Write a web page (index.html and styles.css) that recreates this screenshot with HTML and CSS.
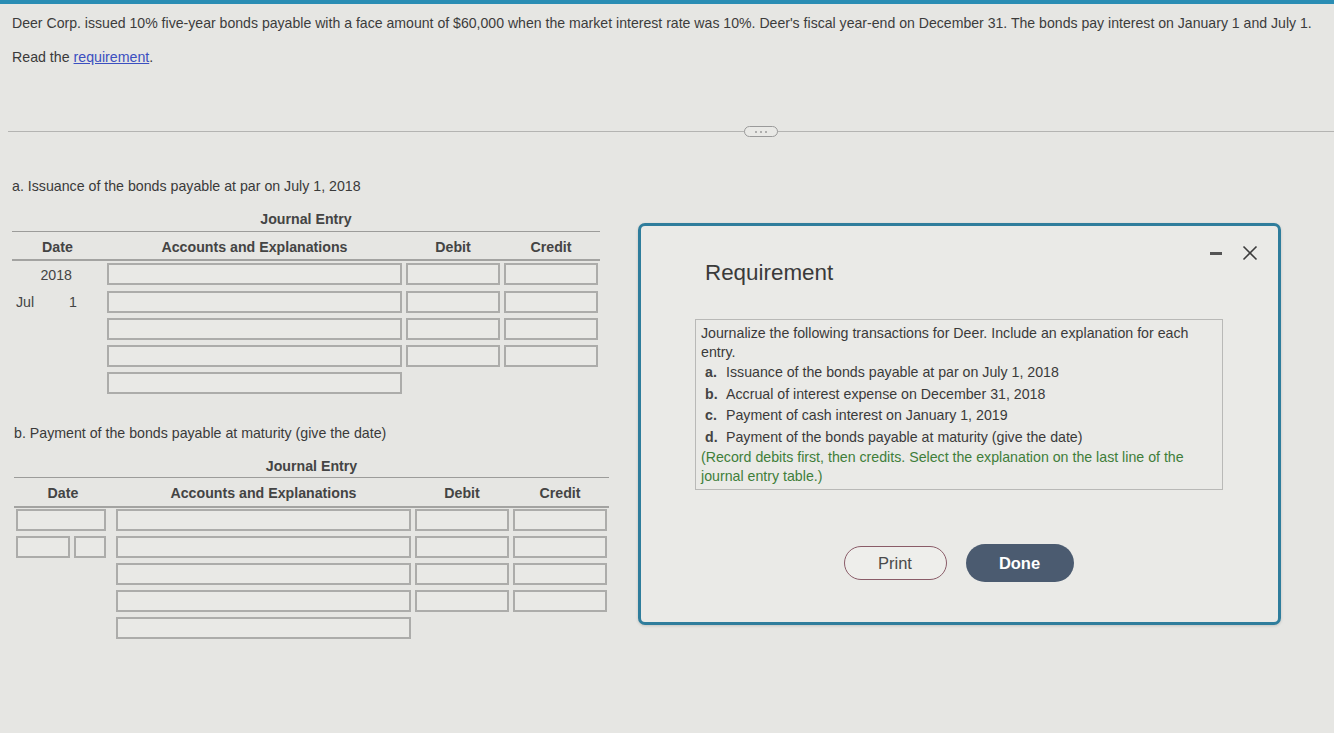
FILE: index.html
```html
<!DOCTYPE html>
<html lang="en">
<head>
<meta charset="utf-8">
<title>Deer Corp. bonds payable</title>
<link rel="stylesheet" href="styles.css">
</head>
<body>
<div class="topbar"></div>
<main class="page">
  <p class="intro">Deer Corp. issued 10% five-year bonds payable with a face amount of $60,000 when the market interest rate was 10%. Deer's fiscal year-end on December 31. The bonds pay interest on January 1 and July 1.</p>
  <p class="read">Read the <a href="#" class="link">requirement</a>.</p>
  <div class="divider"><span class="pill"><i></i><i></i><i></i></span></div>

  <section class="part part-a">
    <p class="part-title">a. Issuance of the bonds payable at par on July 1, 2018</p>
    <div class="journal journal-a">
      <div class="j-title">Journal Entry</div>
      <div class="j-grid j-head">
        <span>Date</span><span>Accounts and Explanations</span><span>Debit</span><span>Credit</span>
      </div>
      <div class="j-grid j-rows">
        <div class="date-cell year">2018</div><div class="box"></div><div class="box"></div><div class="box"></div>
        <div class="date-cell day"><span>Jul</span><span>1</span></div><div class="box"></div><div class="box"></div><div class="box"></div>
        <div class="date-cell"></div><div class="box"></div><div class="box"></div><div class="box"></div>
        <div class="date-cell"></div><div class="box"></div><div class="box"></div><div class="box"></div>
        <div class="date-cell"></div><div class="box"></div><div></div><div></div>
      </div>
    </div>
  </section>

  <section class="part part-b">
    <p class="part-title">b. Payment of the bonds payable at maturity (give the date)</p>
    <div class="journal journal-b">
      <div class="j-title">Journal Entry</div>
      <div class="j-grid j-head">
        <span>Date</span><span>Accounts and Explanations</span><span>Debit</span><span>Credit</span>
      </div>
      <div class="j-grid j-rows">
        <div class="date-cell"><div class="box date-full"></div></div><div class="box"></div><div class="box"></div><div class="box"></div>
        <div class="date-cell split"><div class="box"></div><div class="box"></div></div><div class="box"></div><div class="box"></div><div class="box"></div>
        <div class="date-cell"></div><div class="box"></div><div class="box"></div><div class="box"></div>
        <div class="date-cell"></div><div class="box"></div><div class="box"></div><div class="box"></div>
        <div class="date-cell"></div><div class="box"></div><div></div><div></div>
      </div>
    </div>
  </section>
</main>

<div class="modal">
  <div class="modal-controls">
    <span class="minimize"></span>
    <svg class="close" width="16" height="16" viewBox="0 0 16 16"><path d="M1.5 1.5 L14.5 14.5 M14.5 1.5 L1.5 14.5" stroke="#3c3c3c" stroke-width="1.6" fill="none"/></svg>
  </div>
  <h2 class="modal-title">Requirement</h2>
  <div class="req-box">
    <p class="req-lead">Journalize the following transactions for Deer. Include an explanation for each entry.</p>
    <ol class="req-list">
      <li><b>a.</b><span>Issuance of the bonds payable at par on July 1, 2018</span></li>
      <li><b>b.</b><span>Accrual of interest expense on December 31, 2018</span></li>
      <li><b>c.</b><span>Payment of cash interest on January 1, 2019</span></li>
      <li><b>d.</b><span>Payment of the bonds payable at maturity (give the date)</span></li>
    </ol>
    <p class="req-note">(Record debits first, then credits. Select the explanation on the last line of the journal entry table.)</p>
  </div>
  <div class="modal-actions">
    <button class="btn btn-print">Print</button>
    <button class="btn btn-done">Done</button>
  </div>
</div>
</body>
</html>
```

FILE: styles.css
```css
html, body {
  margin: 0;
  padding: 0;
}
body {
  background: #e6e6e3;
  font-family: "Liberation Sans", Arial, sans-serif;
  color: #3a3a3a;
  font-size: 14.2px;
  line-height: 16px;
  width: 1334px;
  height: 733px;
  overflow: hidden;
  position: relative;
}
.topbar {
  height: 4px;
  background: #2a8db4;
}
.page {
  padding: 0 0 0 12px;
}
p { margin: 0; }
.intro {
  margin-top: 11px;
  font-size: 14.1px;
  white-space: nowrap;
  color: #3c3c3c;
}
.read {
  margin-top: 18px;
}
.link {
  color: #3b4fc0;
  text-decoration: underline;
}
.divider {
  margin: 66px 0 0 -4px;
  height: 1px;
  background: #b4b4b2;
  position: relative;
}
.pill {
  position: absolute;
  left: 736px;
  top: -5px;
  width: 32px;
  height: 9px;
  border: 1px solid #9a9a9a;
  border-radius: 6px;
  background: #e9e9e6;
  display: flex;
  justify-content: center;
  align-items: center;
  gap: 3px;
}
.pill i {
  width: 2px;
  height: 2px;
  border-radius: 1px;
  background: #9a9a9a;
}
.part-a { margin-top: 46px; }
.part-b { margin-top: 31px; }
.part-b .part-title { padding-left: 2px; }

.journal { margin-top: 17px; }
.journal-a { width: 588px; }
.journal-b { width: 595px; margin-left: 2px; margin-top: 17px; }

.j-title {
  text-align: center;
  font-weight: bold;
  color: #444;
  padding-bottom: 4px;
  border-bottom: 1px solid #9c9c9a;
}
.journal-b .j-title { padding-bottom: 3px; }

.j-grid {
  display: grid;
  column-gap: 4px;
}
.journal-a .j-grid { grid-template-columns: 91px 295px 94px 94px; }
.journal-b .j-grid { grid-template-columns: 98px 295px 94px 94px; }

.j-head {
  padding: 7px 0 4px;
  border-bottom: 2px solid #a3a3a1;
  font-weight: bold;
  color: #444;
  text-align: center;
}
.journal-b .j-head { padding-bottom: 5px; }

.j-rows {
  margin-top: 2px;
  row-gap: 5px;
}
.journal-b .j-rows { margin-top: 1px; }

.box {
  height: 18px;
  border: 2px solid #acacaa;
  background: #e9e9e6;
}
.date-cell {
  height: 22px;
  line-height: 22px;
  color: #444;
}
.date-cell.year {
  text-align: right;
  padding-right: 31px;
  margin-top: 1px;
}
.date-cell.day {
  display: flex;
  justify-content: space-between;
  padding: 0 26px 0 4px;
}
.date-full {
  width: 86px;
  margin-left: 2px;
}
.date-cell.split {
  display: flex;
  gap: 4px;
  padding-left: 2px;
}
.date-cell.split .box:first-child { width: 50px; }
.date-cell.split .box:last-child { width: 28px; }

/* Requirement dialog */
.modal {
  position: absolute;
  left: 638px;
  top: 223px;
  width: 637px;
  height: 396px;
  border: 3px solid #2f7d9c;
  border-radius: 7px;
  background: #eaeae7;
  box-shadow: 0 1px 3px rgba(0,0,0,0.15);
}
.modal-controls {
  position: absolute;
  right: 20px;
  top: 19px;
  display: flex;
  align-items: center;
  gap: 20px;
}
.minimize {
  width: 12px;
  height: 3px;
  background: #555;
}
.modal-title {
  margin: 33px 0 0 64px;
  font-size: 22.4px;
  line-height: 28px;
  font-weight: normal;
  color: #3a3a3a;
}
.req-box {
  margin: 32px 0 0 54px;
  width: 521px;
  border: 1px solid #b9b9b7;
  padding: 4px 0 3px 5px;
  font-size: 14.2px;
  line-height: 19px;
  color: #3a3a3a;
}
.req-list {
  list-style: none;
  margin: 0;
  padding: 0 0 0 4px;
  line-height: 21.5px;
}
.req-list li {
  display: flex;
}
.req-list b {
  width: 21px;
  font-weight: bold;
  color: #444;
}
.req-note {
  color: #3f7e3a;
  line-height: 19px;
}
.modal-actions {
  display: flex;
  justify-content: center;
  align-items: center;
  gap: 19px;
  margin-top: 54px;
  padding-right: 2px;
}
.btn {
  font-family: "Liberation Sans", Arial, sans-serif;
  font-size: 16.5px;
  border-radius: 19px;
  cursor: pointer;
}
.btn-print {
  width: 103px;
  height: 34px;
  background: #eeeeeb;
  border: 1.5px solid #8a5c68;
  color: #4a4a4a;
}
.btn-done {
  width: 108px;
  height: 38px;
  background: #4b5b70;
  border: none;
  color: #fff;
  font-weight: bold;
}
```
